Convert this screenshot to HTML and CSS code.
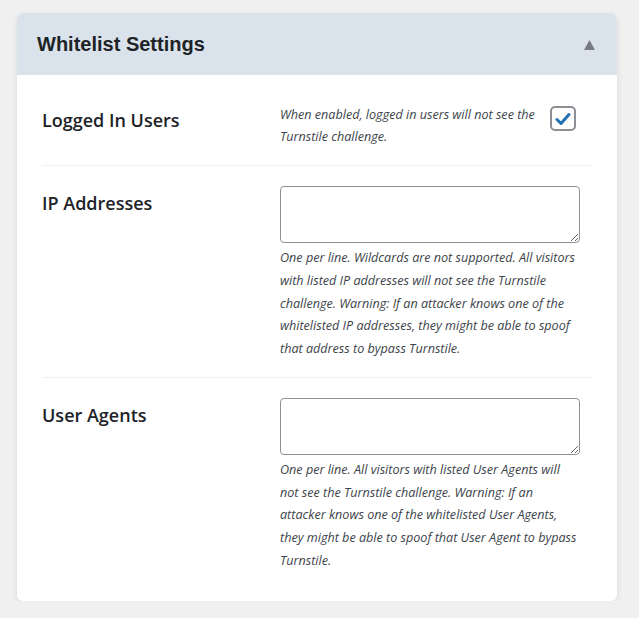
FILE: index.html
```html
<!DOCTYPE html>
<html lang="en">
<head>
<meta charset="utf-8">
<title>Whitelist Settings</title>
<link rel="stylesheet" href="styles.css">
</head>
<body>
<section class="card">
  <header class="card-head">
    <h2 class="card-title">Whitelist Settings</h2>
    <svg class="toggle" width="11" height="10" viewBox="0 0 11 10" aria-hidden="true"><polygon points="5.5,0 11,10 0,10" fill="#787c82"/></svg>
  </header>
  <div class="card-body">
    <div class="row">
      <div class="label">Logged In Users</div>
      <div class="field field-inline">
        <p class="desc">When enabled, logged in users will not see the Turnstile challenge.</p>
        <span class="checkbox">
          <svg width="16" height="14" viewBox="0 0 16 14" aria-hidden="true"><path d="M2 7.5 L6 11.5 L14 2.5" fill="none" stroke="#2271b1" stroke-width="3" stroke-linecap="round" stroke-linejoin="round"/></svg>
        </span>
      </div>
    </div>
    <div class="row">
      <div class="label">IP Addresses</div>
      <div class="field">
        <textarea class="textarea"></textarea>
        <p class="desc">One per line. Wildcards are not supported. All visitors with listed IP addresses will not see the Turnstile challenge. Warning: If an attacker knows one of the whitelisted IP addresses, they might be able to spoof that address to bypass Turnstile.</p>
      </div>
    </div>
    <div class="row row-last">
      <div class="label">User Agents</div>
      <div class="field">
        <textarea class="textarea"></textarea>
        <p class="desc">One per line. All visitors with listed User Agents will not see the Turnstile challenge. Warning: If an attacker knows one of the whitelisted User Agents, they might be able to spoof that User Agent to bypass Turnstile.</p>
      </div>
    </div>
  </div>
</section>
</body>
</html>
```
FILE: styles.css
```css
html, body {
  margin: 0;
  background: #f0f0f1;
}
body {
  padding: 13px 22px 0 17px;
  font-family: "Open Sans", "Noto Sans", sans-serif;
  color: #1d2327;
}
.card {
  width: 600px;
  background: #fff;
  border-radius: 6px;
  box-shadow: 0 2px 6px rgba(0, 0, 0, 0.09);
  overflow: hidden;
}
.card-head {
  height: 62px;
  background: #dae3eb;
  display: flex;
  align-items: center;
  justify-content: space-between;
  padding: 0 22px 0 20px;
  box-sizing: border-box;
}
.card-title {
  margin: 0;
  font-family: "Liberation Sans", Arial, sans-serif;
  font-weight: 700;
  font-size: 20px;
  color: #1d2327;
}
.toggle {
  display: block;
  margin-top: 1px;
}
.card-body {
  padding: 8px 25px 12px;
}
.row {
  display: grid;
  grid-template-columns: 238px 300px;
  padding: 20px 0 17px;
  border-bottom: 1px solid #f0f0f1;
}
.row + .row {
  padding-bottom: 16px;
}
.row-last {
  border-bottom: 0;
}
.label {
  font-size: 18px;
  font-weight: 600;
  line-height: 24px;
  padding-top: 5px;
}
.field {
  display: flex;
  flex-direction: column;
}
.field-inline {
  flex-direction: row;
  align-items: flex-start;
}
.desc {
  margin: 0;
  font-size: 12.6px;
  font-style: italic;
  line-height: 22.75px;
  color: #3c434a;
}
.field-inline .desc {
  flex: 1;
  margin-top: 1px;
  line-height: 22px;
}
.checkbox {
  width: 26px;
  height: 25px;
  box-sizing: border-box;
  border: 2px solid #8c8f94;
  border-radius: 5px;
  display: flex;
  align-items: center;
  justify-content: center;
  margin: 3px 4px 0 12px;
  flex: none;
}
.checkbox svg {
  display: block;
}
.textarea {
  display: block;
  width: 300px;
  height: 57px;
  box-sizing: border-box;
  border: 1px solid #8c8f94;
  border-radius: 4px;
  background: #fff;
  margin: 0 0 4px;
  padding: 4px 8px;
  font: inherit;
}
```
